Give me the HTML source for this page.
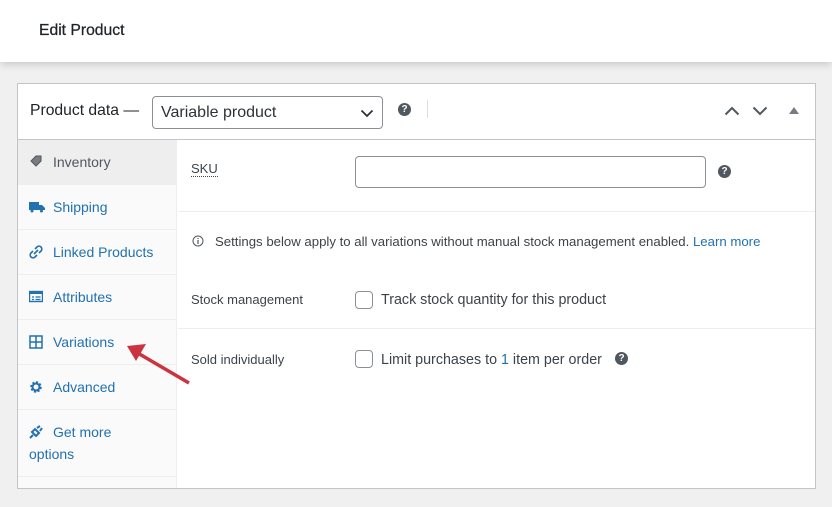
<!DOCTYPE html>
<html><head><meta charset="utf-8"><style>
*{box-sizing:border-box;margin:0;padding:0}
body{width:832px;height:507px;background:#f0f0f1;font-family:"Liberation Sans",sans-serif;color:#3c434a;position:relative;overflow:hidden}
.top{position:absolute;left:0;top:0;width:832px;height:62px;background:#fff;box-shadow:0 2px 8px rgba(0,0,0,.18)}
.top h1{position:absolute;left:39px;top:22px;font-size:15.7px;font-weight:normal;color:#1d2327;-webkit-text-stroke:0.25px #1d2327}
.box{position:absolute;left:17px;top:83px;width:799px;height:406px;background:#fff;border:1px solid #c3c4c7}
.hdr{position:absolute;left:0;top:0;width:797px;height:56px;border-bottom:1px solid #c3c4c7}
.hdr .t{position:absolute;left:12px;top:18px;font-size:15.7px;color:#1d2327}
.sel{position:absolute;left:134px;top:12px;width:231px;height:33px;border:1px solid #8c8f94;border-radius:4px;font-size:16px;color:#2c3338;padding:7px 8px}
.q{position:absolute;width:13px;height:13px;border-radius:50%;background:#50575e;color:#fff;font-size:10px;font-weight:bold;text-align:center;line-height:13px}
.side{position:absolute;left:0;top:56px;width:159px;height:348px;background:#fafafa;border-right:1px solid #eee}
.it{position:absolute;left:0;width:159px;height:45px;border-bottom:1px solid #eee;color:#2271b1;font-size:14px}
.it span{position:absolute;left:35px;top:14px}
.it svg{position:absolute;left:11px;top:15px}
.c{position:absolute;font-size:13px}
.line{position:absolute;left:160px;width:637px;height:1px;background:#eee}
.cb{position:absolute;width:18px;height:18px;border:1px solid #8c8f94;border-radius:4px;background:#fff}
</style></head><body>
<div class="top"><h1>Edit Product</h1></div>
<div class="box">
 <div class="hdr">
  <div class="t">Product data —</div>
  <div class="sel">Variable product
   <svg style="position:absolute;right:8px;top:12px" width="14" height="9" viewBox="0 0 14 9"><path d="M1.5 1.5l5.5 5.5 5.5-5.5" fill="none" stroke="#2c3338" stroke-width="1.8"/></svg></div>
  <div class="q" style="left:380px;top:19px">?</div>
  <div style="position:absolute;left:409px;top:16px;width:1px;height:18px;background:#ddd"></div>
  <svg style="position:absolute;left:706px;top:22px" width="16" height="10" viewBox="0 0 16 10"><path d="M1.5 8.5l6.5-6.5 6.5 6.5" fill="none" stroke="#50575e" stroke-width="2"/></svg>
  <svg style="position:absolute;left:734px;top:22px" width="16" height="10" viewBox="0 0 16 10"><path d="M1.5 1.5l6.5 6.5 6.5-6.5" fill="none" stroke="#50575e" stroke-width="2"/></svg>
  <svg style="position:absolute;left:771px;top:23px" width="10" height="7" viewBox="0 0 10 7"><path d="M0 7L5 0L10 7Z" fill="#787c82"/></svg>
 </div>
 <div class="side">
  <div class="it" style="top:0;background:#eee;color:#50575e"><svg width="14" height="14" viewBox="0 0 14 14"><path d="M2 6l5-5h5v5l-5 5z" fill="#787c82" stroke="#50575e"/></svg><span>Inventory</span></div>
  <div class="it" style="top:45px"><svg width="16" height="14" viewBox="0 0 16 14"><path d="M0 2h10v8H0zM10 5h3l3 3v2h-6z" fill="#2271b1"/><circle cx="3" cy="11" r="1.5" fill="#2271b1"/><circle cx="12.5" cy="11" r="1.5" fill="#2271b1"/></svg><span>Shipping</span></div>
  <div class="it" style="top:90px"><svg width="14" height="14" viewBox="0 0 14 14"><path d="M6 4l2-2a2.5 2.5 0 0 1 4 4l-2 2M8 10l-2 2a2.5 2.5 0 0 1-4-4l2-2M5 9l4-4" fill="none" stroke="#2271b1" stroke-width="1.6"/></svg><span>Linked Products</span></div>
  <div class="it" style="top:135px"><svg width="14" height="14" viewBox="0 0 14 14"><rect x="0.5" y="1.5" width="13" height="10" fill="none" stroke="#2271b1" stroke-width="1.4"/><rect x="0.5" y="1.5" width="13" height="2.5" fill="#2271b1"/><path d="M3 7h2M3 9.5h2M6.5 7h5M6.5 9.5h5" stroke="#2271b1" stroke-width="1.2"/></svg><span>Attributes</span></div>
  <div class="it" style="top:180px"><svg width="14" height="14" viewBox="0 0 14 14"><path d="M1 1h12v12H1zM7 1v12M1 7h12" fill="none" stroke="#2271b1" stroke-width="1.5"/></svg><span>Variations</span></div>
  <div class="it" style="top:225px"><svg width="14" height="14" viewBox="0 0 14 14"><circle cx="7" cy="7" r="4.5" fill="none" stroke="#2271b1" stroke-width="2.5" stroke-dasharray="2 1.5"/><circle cx="7" cy="7" r="3.5" fill="none" stroke="#2271b1" stroke-width="2"/></svg><span>Advanced</span></div>
  <div class="it" style="top:270px;height:67px"><svg width="14" height="14" viewBox="0 0 14 14"><path d="M1 13l3-3M3 7l4 4 3-3-4-4zM8 3l3-2M11 6l2-3" fill="none" stroke="#2271b1" stroke-width="2"/></svg><span style="line-height:22px;top:11px;left:11px;text-indent:24px;width:120px">Get more options</span></div>
 </div>
 <div class="c" style="left:173px;top:78px;border-bottom:1px dotted #3c434a;line-height:14px">SKU</div>
 <div style="position:absolute;left:337px;top:72px;width:351px;height:32px;border:1px solid #8c8f94;border-radius:4px"></div>
 <div class="q" style="left:700px;top:81px">?</div>
 <div class="line" style="top:127px"></div>
 <svg style="position:absolute;left:174px;top:151px" width="12" height="12" viewBox="0 0 12 12"><circle cx="6" cy="6" r="5" fill="none" stroke="#50575e"/><path d="M6 5v4M6 3v1" stroke="#50575e" stroke-width="1.2"/></svg>
 <div class="c" style="left:197px;top:150px;font-size:13.2px">Settings below apply to all variations without manual stock management enabled. <span style="color:#2271b1">Learn more</span></div>
 <div class="c" style="left:173px;top:208px">Stock management</div>
 <div class="cb" style="left:337px;top:207px"></div>
 <div class="c" style="left:363px;top:208px;font-size:14.3px">Track stock quantity for this product</div>
 <div class="line" style="top:244px"></div>
 <div class="c" style="left:173px;top:268px">Sold individually</div>
 <div class="cb" style="left:337px;top:266px"></div>
 <div class="c" style="left:363px;top:268px;font-size:14.3px">Limit purchases to <span style="color:#2271b1">1</span> item per order</div>
 <div class="q" style="left:597px;top:268px">?</div>
</div>
<svg style="position:absolute;left:0;top:0" width="832" height="507"><path d="M189 383L136 352" stroke="#cc3340" stroke-width="3.5"/><path d="M127 346L146 344L136 361Z" fill="#cc3340"/></svg>
</body></html>
